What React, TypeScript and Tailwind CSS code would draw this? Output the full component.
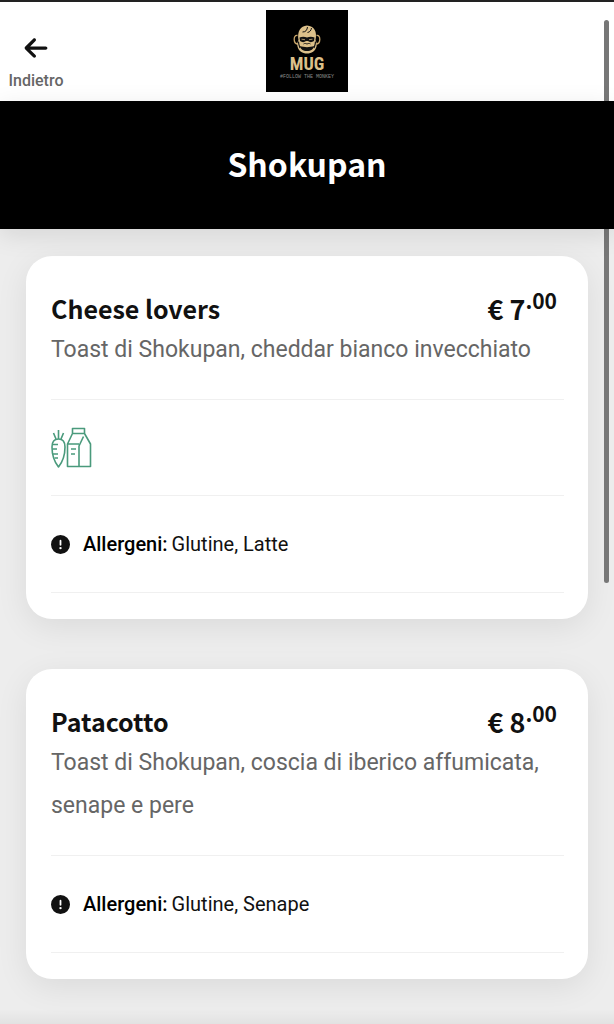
import React from 'react';
import { FaArrowLeft, FaCircleExclamation } from 'react-icons/fa6';

interface Dish {
  name: string;
  euros: string;
  cents: string;
  description: string;
  vegetarian?: boolean;
  allergens: string;
}

const dishes: Dish[] = [
  {
    name: 'Cheese lovers',
    euros: '7',
    cents: '.00',
    description: 'Toast di Shokupan, cheddar bianco invecchiato',
    vegetarian: true,
    allergens: 'Glutine, Latte',
  },
  {
    name: 'Patacotto',
    euros: '8',
    cents: '.00',
    description: 'Toast di Shokupan, coscia di iberico affumicata, senape e pere',
    allergens: 'Glutine, Senape',
  },
];

const Logo: React.FC = () => (
  <svg viewBox="0 0 82 82" className="h-[82px] w-[82px]" role="img" aria-label="MUG">
    <rect width="82" height="82" fill="#000" />
    {/* ears */}
    <g fill="none" stroke="#c9a66b" strokeWidth="1.3">
      <path d="M31.500 25.500c-4.500-1-4.500 8.500 .5 8.500" />
      <path d="M50.500 25.500c4.500-1 4.500 8.500-.5 8.500" />
    </g>
    {/* head */}
    <path
      d="M32.500 30c-1.500-8.500 2-14 8.500-14.500 7 .5 10.500 6 8.500 14.500 1 2 1.500 4 1 6.500-1 4.500-5 7-9.500 7s-8.500-2.500-9.500-7c-.5-2.500 0-4.500 1-6.500z"
      fill="#dcc08a"
    />
    {/* shades, nose and mouth */}
    <path d="M33.500 27.500c2.500-1 5-1 7.500 0 2.500-1 5-1 7.500 0l-.5 3.500c-2 1.500-4.500 1.500-6 0h-2c-1.500 1.500-4 1.500-6 0z" fill="#111" />
    <path d="M35.500 29.200l3.500 .5M43 29.700l3.500-.5" stroke="#dcc08a" strokeWidth=".7" />
    <path d="M32.500 31.500c0 3 1 4.500 1.500 6.500M49.500 31.500c0 3-1 4.500-1.500 6.500" fill="none" stroke="#111" strokeWidth="1.2" />
    <path d="M34 36c4 1.500 10 1.500 14 0-.5 3.500-3 5-7 5s-6.500-1.500-7-5z" fill="#111" />
    <path d="M37.500 34c1.500-1 2-.5 3.500 0 1.500-.5 2-1 3.500 0" fill="none" stroke="#111" strokeWidth=".9" />
    <path d="M36.500 22c3.500 0 4.500-2 5-5M41.500 22.500c2.500-.5 3.500-2 4-4.500" fill="none" stroke="#111" strokeWidth="1" />
    <text
      x="41"
      y="60"
      textAnchor="middle"
      fill="#dcc08a"
      className="font-['Roboto_Condensed','Noto_Sans_CJK_SC',sans-serif] text-[18px] font-bold"
    >
      MUG
    </text>
    <text
      x="41"
      y="68"
      textAnchor="middle"
      fill="#8a8a8a"
      className="font-['Liberation_Mono',monospace] text-[5px]"
    >
      #FOLLOW THE MONKEY
    </text>
  </svg>
);

const VegetarianIcon: React.FC = () => (
  <svg
    viewBox="0 0 42 42"
    className="h-[42px] w-[42px]"
    fill="none"
    stroke="#4a9a7c"
    strokeWidth="1.600"
    strokeLinejoin="round"
    role="img"
    aria-label="Vegetariano"
  >
    {/* carrot */}
    <path d="M7.500 40C3.500 35 1 28 1 20c0-5 2.500-8 6.500-8S14 15 14 20c0 8-2.500 15-6.500 20z" />
    <path d="M7.500 12V3M5 12 2.500 6M10 12l2.500-6M1.500 17.500H7M1.500 22H6M2 27h5M3.500 31H7" />
    {/* milk carton */}
    <path d="M21.500 1.500h12v5h-12zM21.500 6.500 16.500 17v22.500h23V17L33.500 6.500M16.500 17H28M28 39.500V19l4.500-9.500M20 22h5M20 27h4" />
  </svg>
);

const DishCard: React.FC<{ dish: Dish }> = ({ dish }) => (
  <article className="rounded-[26px] bg-white px-6 pt-[35px] pb-[26px] shadow-[0_8px_32px_rgba(0,0,0,0.08)]">
    <div className="mb-px flex h-9 items-center justify-between pr-[7px] pl-px font-['Noto_Sans_CJK_SC',sans-serif] font-bold text-[#111]">
      <h2 className="text-[25px]">{dish.name}</h2>
      <p className="text-[27px] whitespace-nowrap">
        € {dish.euros}
        <sup className="text-[21px]">{dish.cents}</sup>
      </p>
    </div>
    <p className="pl-px text-[23px] leading-[43px] text-[#666]">{dish.description}</p>
    <div className="mt-7 ml-px divide-y divide-[#f0f0f0] border-y border-[#f0f0f0]">
      {dish.vegetarian && (
        <div className="flex h-24 items-center">
          <VegetarianIcon />
        </div>
      )}
      <p className="flex h-24 items-center text-[20px] text-[#111]">
        <FaCircleExclamation className="mr-[13px] h-[19px] w-[19px]" />
        <strong className="mr-1 font-medium text-black">Allergeni:</strong>
        {dish.allergens}
      </p>
    </div>
  </article>
);

export default function App() {
  return (
    <div className="relative min-h-screen bg-[#ededed] font-[Roboto,sans-serif]">
      <header className="grid grid-cols-3 border-t-2 border-[#222] bg-white px-2 pt-2 pb-[9px]">
        <button type="button" className="flex w-14 flex-col items-center justify-end justify-self-start pb-px text-[16px] leading-5 font-medium text-[#666]">
          <FaArrowLeft className="mb-[10px] h-[26px] w-[26px] text-[#111]" />
          Indietro
        </button>
        <div className="justify-self-center">
          <Logo />
        </div>
      </header>
      <div className="relative z-10 flex h-32 items-center justify-center bg-black pb-1 shadow-[0_6px_24px_rgba(0,0,0,0.1)]">
        <h1 className="font-['Noto_Sans_CJK_SC',sans-serif] text-[32px] font-bold text-white">Shokupan</h1>
      </div>
      <main className="flex flex-col gap-[50px] px-[26px] pt-[27px] pb-[30px]">
        {dishes.map((dish) => (
          <DishCard key={dish.name} dish={dish} />
        ))}
      </main>
      <div className="h-4 bg-linear-to-b from-transparent to-black/5" />
      {/* scroll thumb */}
      <div className="absolute top-5 right-[5px] h-[563px] w-[5px] rounded-full bg-[#777]" />
    </div>
  );
}
